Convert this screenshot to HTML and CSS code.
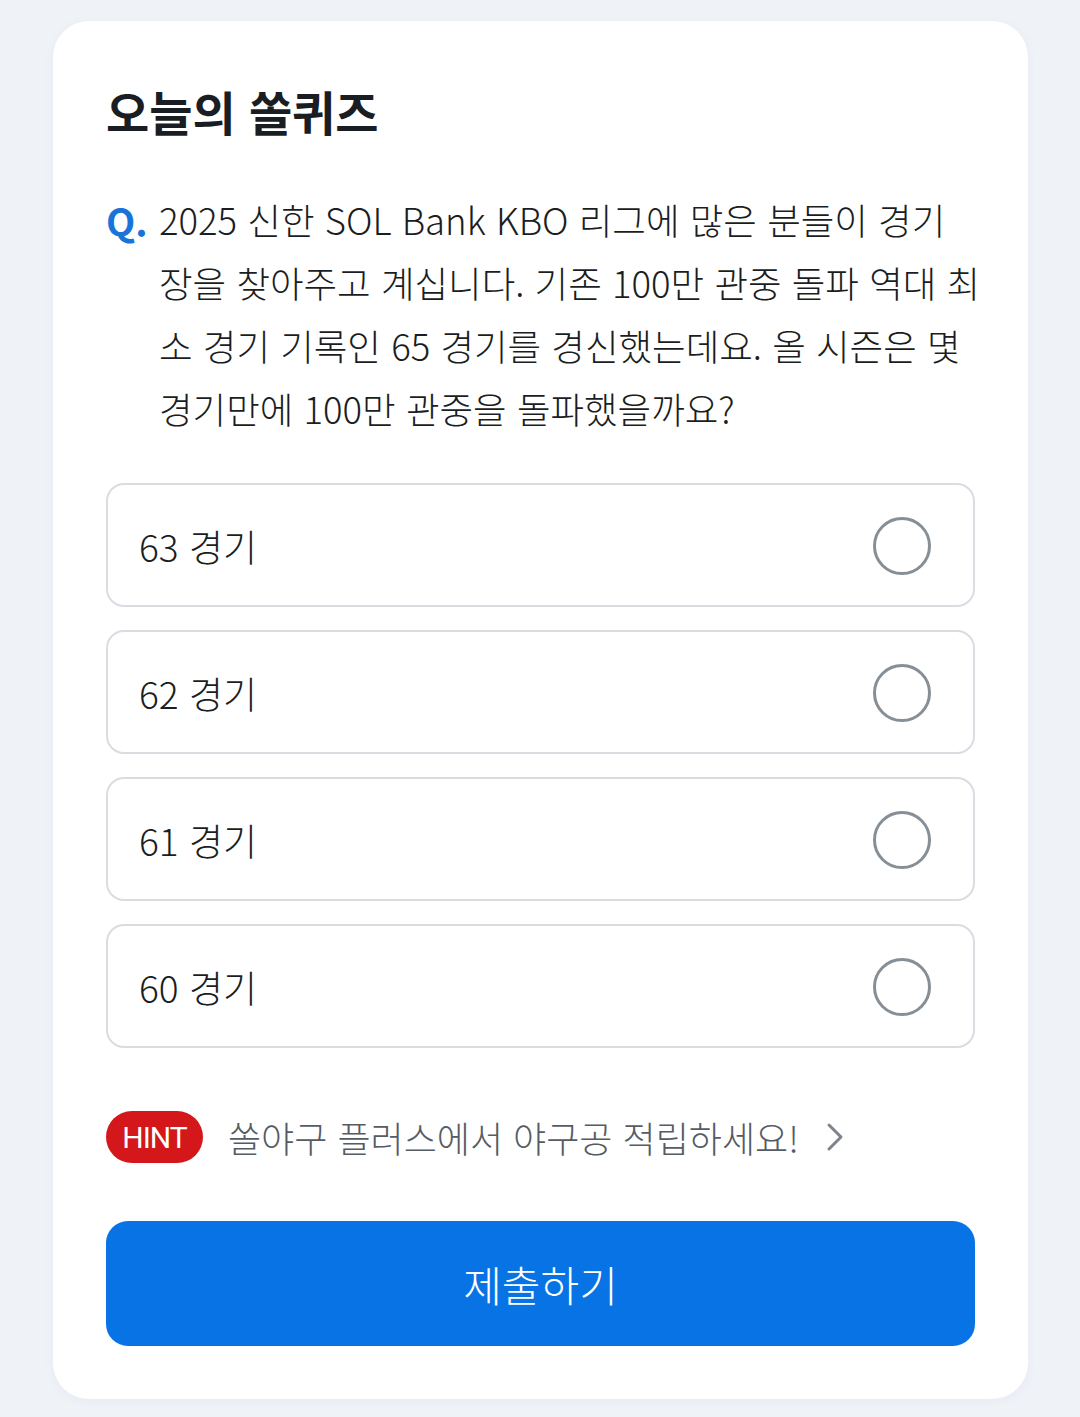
FILE: index.html
```html
<!DOCTYPE html>
<html lang="ko">
<head>
  <meta charset="UTF-8" />
  <meta name="viewport" content="width=device-width, initial-scale=1.0"/>
  <title>오늘의 쏠퀴즈</title>
  <link rel="stylesheet" href="styles.css">
</head>
<body>

  <div class="card">
    <h1 class="title">오늘의 쏠퀴즈</h1>

    <div class="question">
      <span class="q-mark">Q.</span>
      <p class="q-text">2025 신한 SOL Bank KBO 리그에 많은 분들이 경기<br>장을 찾아주고 계십니다. 기존 100만 관중 돌파 역대 최소 경기 기록인 65 경기를 경신했는데요. 올 시즌은 몇 경기만에 100만 관중을 돌파했을까요?</p>
    </div>

    <!-- answer options -->
    <div class="options">
      <label class="option"><span>63 경기</span><span class="radio"></span></label>
      <label class="option"><span>62 경기</span><span class="radio"></span></label>
      <label class="option"><span>61 경기</span><span class="radio"></span></label>
      <label class="option"><span>60 경기</span><span class="radio"></span></label>
    </div>

    <div class="hint">
      <span class="badge">HINT</span>
      <span class="hint-text">쏠야구 플러스에서 야구공 적립하세요!</span>
      <svg class="chevron" width="20" height="30" viewBox="0 0 20 30">
        <path d="M4 3 L16 15 L4 27" fill="none" stroke="#7d848c" stroke-width="3" stroke-linecap="round" stroke-linejoin="round"/>
      </svg>
    </div>

    <button class="submit">제출하기</button>
  </div>

</body>
</html>
```

FILE: styles.css
```css
body {
  font-family: "Noto Sans CJK KR", "Noto Sans", sans-serif;
  background: #eff2f7;
  margin: 0;
  padding: 21px 52px 17px 53px;
}

.card {
  background: #fff;
  border-radius: 36px;
  padding: 60px 53px 53px 53px;
  box-shadow: 0 2px 12px rgba(40, 60, 100, 0.04);
}

.title {
  margin: 0;
  font-size: 47px;
  line-height: 60px;
  font-weight: 700;
  color: #1a1d21;
}

.question {
  display: flex;
  margin-top: 47px;
}

.q-mark {
  flex: 0 0 53px;
  font-size: 38px;
  line-height: 63px;
  font-weight: 700;
  color: #1a73d9;
}

.q-text {
  margin: 0 -10px 0 0;
  font-size: 36.5px;
  line-height: 63px;
  font-weight: 300;
  color: #1a1d21;
}

.options {
  display: flex;
  flex-direction: column;
  gap: 23px;
  margin-top: 43px;
}

.option {
  display: flex;
  align-items: center;
  justify-content: space-between;
  height: 124px;
  box-sizing: border-box;
  padding: 2px 42px 0 31px;
  border: 2px solid #d9dde2;
  border-radius: 18px;
  font-size: 37px;
  font-weight: 300;
  color: #1a1d21;
  cursor: pointer;
}

.radio {
  width: 52px;
  height: 52px;
  border: 3px solid #868e96;
  border-radius: 50%;
}

.hint {
  display: flex;
  align-items: center;
  margin-top: 63px;
  height: 52px;
}

.badge {
  display: flex;
  align-items: center;
  justify-content: center;
  width: 97px;
  height: 52px;
  border-radius: 26px;
  background: #d3171b;
  color: #fff;
  font-family: "Roboto", "Noto Sans", sans-serif;
  font-size: 30px;
  letter-spacing: -1px;
}

.hint-text {
  margin-left: 25px;
  font-size: 36px;
  font-weight: 300;
  color: #555c64;
}

.chevron {
  margin-left: 26px;
}

.submit {
  display: block;
  width: 100%;
  height: 125px;
  margin-top: 58px;
  border: none;
  border-radius: 22px;
  background: #0873e4;
  color: #fff;
  font-family: "Noto Sans CJK KR", "Noto Sans", sans-serif;
  font-size: 42px;
  font-weight: 300;
  cursor: pointer;
}
```
